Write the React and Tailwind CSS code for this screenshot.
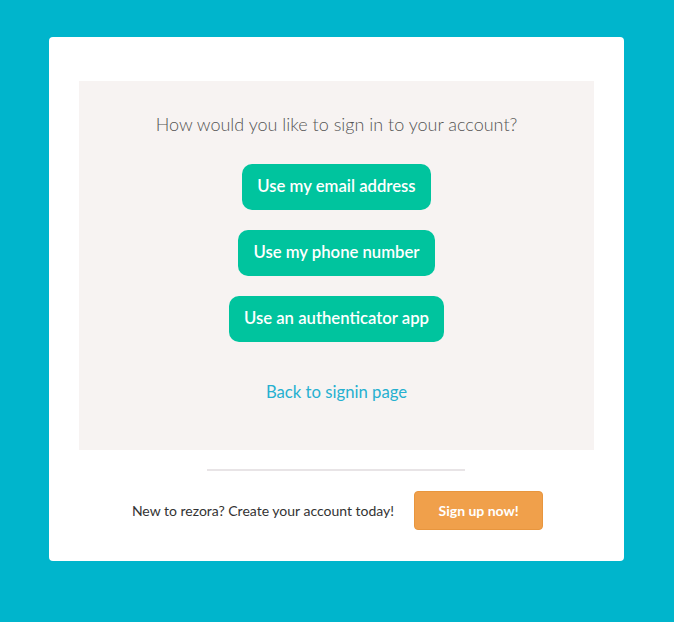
import React from "react";

export default function App() {
  const options = [
    "Use my email address",
    "Use my phone number",
    "Use an authenticator app",
  ];

  return (
    <div
      className="min-h-[622px] w-full bg-[#00b5cc] pt-[37px] pl-[49px]"
      style={{ fontFamily: "Lato, 'Open Sans', sans-serif" }}
    >
      {/* CARD */}
      <div className="w-[575px] h-[524px] bg-white rounded-[4px] px-[30px] pt-[44px]">
        {/* OPTIONS PANEL */}
        <div className="h-[369px] bg-[#f7f3f2] flex flex-col items-center pt-[31px]">
          <h2 className="text-[18px] font-light text-[#555] leading-[24px]">
            How would you like to sign in to your account?
          </h2>

          <div className="flex flex-col items-center gap-[20px] mt-[28px]">
            {options.map((o, i) => (
              <button
                key={i}
                className="h-[46px] px-[15px] rounded-[10px] bg-[#00c49e] text-white text-[16.7px] font-semibold"
              >
                {o}
              </button>
            ))}
          </div>

          <a className="mt-[39px] text-[16.7px] text-[#26b0d0] leading-[22px] cursor-pointer">
            Back to signin page
          </a>
        </div>

        {/* DIVIDER */}
        <div className="w-[258px] h-[2px] bg-[#e8e4e6] ml-[128px] mt-[19px]" />

        {/* SIGN UP */}
        <div className="flex items-center justify-center gap-[20px] mt-[20px] pl-[2px]">
          <p className="text-[14px] text-[#333]">
            New to rezora? Create your account today!
          </p>
          <button className="w-[129px] h-[39px] rounded-[4px] bg-[#f0a04b] border border-[#e8963e] text-white text-[14px] font-bold">
            Sign up now!
          </button>
        </div>
      </div>
    </div>
  );
}
